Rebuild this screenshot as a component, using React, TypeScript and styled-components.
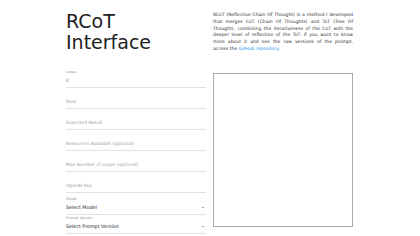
import styled, { createGlobalStyle } from "styled-components";

const GlobalStyle = createGlobalStyle`
  body {
    margin: 0;
    background: #ffffff;
    font-family: "DejaVu Sans", sans-serif;
  }
`;

const textFields = [
  { label: "Loops", value: "0" },
  { label: "Goal" },
  { label: "Expected Result" },
  { label: "Resources Available (optional)" },
  { label: "Max Number of Loops (optional)" },
  { label: "OpenAI Key" },
];

const selectFields = [
  { label: "Model", value: "Select Model", gap: 4 },
  { label: "Prompt Version", value: "Select Prompt Version", gap: 1 },
];

const App = () => {
  return (
    <>
      <GlobalStyle />
      <Page>
        <Title>RCoT Interface</Title>
        <Intro>
          RCoT (Reflective Chain Of Thought) is a method I developed that merges CoT (Chain Of
          Thoughts) and ToT (Tree Of Thought), combining the iterativeness of the CoT with the
          deeper level of reflection of the ToT. If you want to know more about it and see the raw
          versions of the prompt, access the <Link href="#">GitHub repository</Link>.
        </Intro>
        <Form>
          {textFields.map((f, i) => (
            <Field key={f.label} $gap={i === 0 ? 0 : 3}>
              <SmallLabel>{f.value ? f.label : ""}</SmallLabel>
              <InputRow $filled={!!f.value}>{f.value ?? f.label}</InputRow>
            </Field>
          ))}
          {selectFields.map((f) => (
            <Field key={f.label} $gap={f.gap}>
              <SmallLabel>{f.label}</SmallLabel>
              <InputRow $filled $strong>
                {f.value}
                <Arrow />
              </InputRow>
            </Field>
          ))}
        </Form>
        <Output />
      </Page>
    </>
  );
};

export default App;

const Page = styled.div`
  width: 288px;
  margin: 0 auto;
  padding-top: 11px;
  display: grid;
  grid-template-columns: 140px 140px;
  grid-template-rows: 55px auto;
  column-gap: 7px;
`;

const Title = styled.h1`
  margin: 0;
  font-size: 19px;
  line-height: 21px;
  font-weight: 400;
  color: #222222;
  width: 100px;
`;

const Intro = styled.p`
  margin: 1px 0 0;
  font-size: 4.55px;
  line-height: 6.75px;
  color: #333333;
  text-align: justify;
`;

const Link = styled.a`
  color: #2196f3;
  text-decoration: none;
`;

const Form = styled.div`
  display: flex;
  flex-direction: column;
  padding-top: 3.5px;
`;

const Field = styled.div<{ $gap: number }>`
  display: flex;
  flex-direction: column;
  margin-top: ${(p) => p.$gap}px;
  border-bottom: 1px solid #e2e2e2;
`;

const SmallLabel = styled.div`
  height: 5px;
  line-height: 5px;
  font-size: 3.5px;
  color: #9a9a9a;
`;

const InputRow = styled.div<{ $filled?: boolean; $strong?: boolean }>`
  display: flex;
  align-items: center;
  justify-content: space-between;
  height: 12px;
  font-size: ${(p) => (p.$strong ? "4.8px" : "4.5px")};
  color: ${(p) => (p.$strong ? "#222222" : p.$filled ? "#8a8a8a" : "#a0a0a0")};
`;

const Arrow = styled.span`
  width: 0;
  height: 0;
  margin-right: 2px;
  border-left: 1.5px solid transparent;
  border-right: 1.5px solid transparent;
  border-top: 1.5px solid #444444;
`;

const Output = styled.div`
  margin-top: 6.5px;
  height: 154px;
  box-sizing: border-box;
  border: 1px solid #aaaaaa;
`;
